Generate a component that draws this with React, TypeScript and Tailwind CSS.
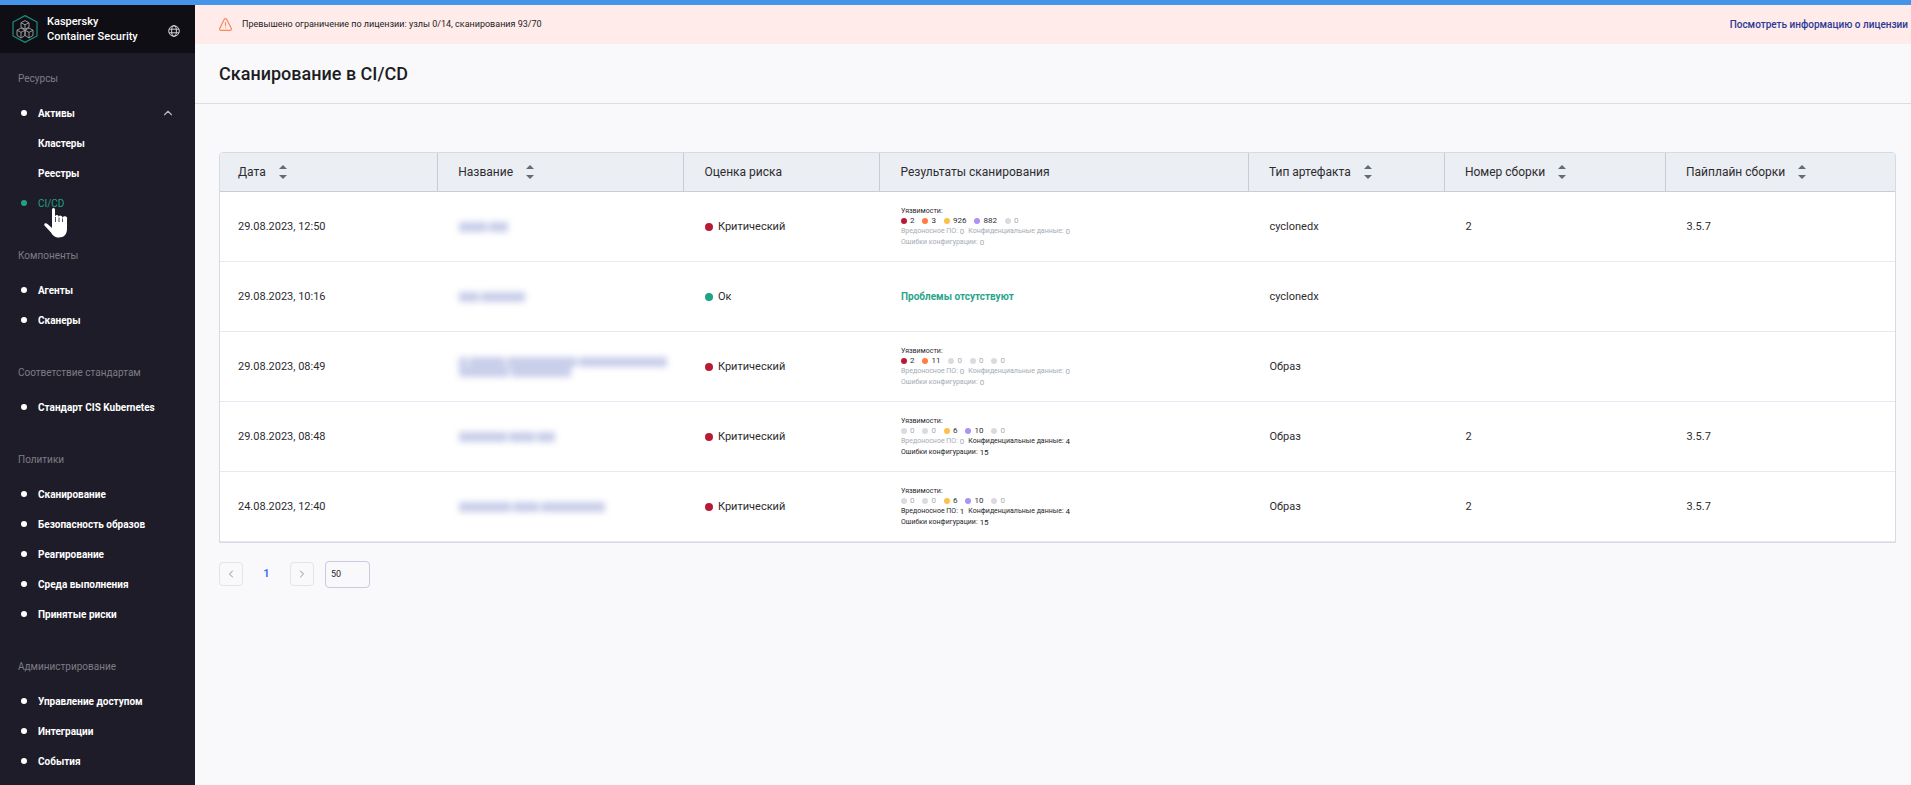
import { ChevronLeft, ChevronRight, ChevronUp } from "lucide-react";
import clsx from "clsx";

const sections = [
  {
    title: "Ресурсы",
    items: [
      { label: "Активы", expanded: true },
      { label: "Кластеры", nested: true },
      { label: "Реестры", nested: true },
      { label: "CI/CD", active: true },
    ],
  },
  { title: "Компоненты", items: [{ label: "Агенты" }, { label: "Сканеры" }] },
  { title: "Соответствие стандартам", items: [{ label: "Стандарт CIS Kubernetes" }] },
  {
    title: "Политики",
    items: [
      { label: "Сканирование" },
      { label: "Безопасность образов" },
      { label: "Реагирование" },
      { label: "Среда выполнения" },
      { label: "Принятые риски" },
    ],
  },
  {
    title: "Администрирование",
    items: [{ label: "Управление доступом" }, { label: "Интеграции" }, { label: "События" }],
  },
] as {
  title: string;
  items: { label: string; expanded?: boolean; nested?: boolean; active?: boolean }[];
}[];

const columns = [
  { label: "Дата", sortable: true, width: "w-[13%]" },
  { label: "Название", sortable: true, width: "w-[14.7%]" },
  { label: "Оценка риска", sortable: false, width: "w-[11.7%]" },
  { label: "Результаты сканирования", sortable: false, width: "w-[22%]" },
  { label: "Тип артефакта", sortable: true, width: "w-[11.7%]" },
  { label: "Номер сборки", sortable: true, width: "w-[13.2%]" },
  { label: "Пайплайн сборки", sortable: true, width: "" },
];

type Results = { vulns: number[]; malware: number; secrets: number; misconfig: number };

// name: word widths of every hidden line
const scans: {
  date: string;
  name: number[][];
  critical: boolean;
  results?: Results;
  type: string;
  build: string;
  pipeline: string;
}[] = [
  {
    date: "29.08.2023, 12:50",
    name: [[28, 19]],
    critical: true,
    results: { vulns: [2, 3, 926, 882, 0], malware: 0, secrets: 0, misconfig: 0 },
    type: "cyclonedx",
    build: "2",
    pipeline: "3.5.7",
  },
  { date: "29.08.2023, 10:16", name: [[20, 44]], critical: false, type: "cyclonedx", build: "", pipeline: "" },
  {
    date: "29.08.2023, 08:49",
    name: [[8, 36, 70, 88], [50, 60]],
    critical: true,
    results: { vulns: [2, 11, 0, 0, 0], malware: 0, secrets: 0, misconfig: 0 },
    type: "Образ",
    build: "",
    pipeline: "",
  },
  {
    date: "29.08.2023, 08:48",
    name: [[48, 26, 18]],
    critical: true,
    results: { vulns: [0, 0, 6, 10, 0], malware: 0, secrets: 4, misconfig: 15 },
    type: "Образ",
    build: "2",
    pipeline: "3.5.7",
  },
  {
    date: "24.08.2023, 12:40",
    name: [[52, 26, 64]],
    critical: true,
    results: { vulns: [0, 0, 6, 10, 0], malware: 1, secrets: 4, misconfig: 15 },
    type: "Образ",
    build: "2",
    pipeline: "3.5.7",
  },
];

const severityColors = ["bg-[#b71a35]", "bg-[#ff7d45]", "bg-[#fbc04f]", "bg-[#ac92f5]", "bg-[#d9dbe0]"];

function Logo() {
  return (
    <svg width="26" height="28" viewBox="0 0 26 28" fill="none" aria-hidden="true">
      <path d="M13 .6 25 7v14l-12 6.400L1 21V7Z" stroke="#1b8f7c" strokeWidth="1.200" />
      <g stroke="#a4a4aa" strokeWidth=".9" strokeLinejoin="round">
        <path d="m13 5.600 4 2.100v4.400l-4 2.200-4-2.200V7.700Z" />
        <path d="m9 7.700 4 2.100 4-2.100M13 9.800v4.500" />
        <path d="m9 13 4 2.200v5.200L9 23l-4-2.600v-5.200Z" />
        <path d="m5 15.200 4 2.200 4-2.200M9 17.400V23" />
        <path d="m17 13 4 2.200v5.200L17 23l-4-2.600v-5.200Z" />
        <path d="m13 15.200 4 2.200 4-2.200M17 17.400V23" />
      </g>
    </svg>
  );
}

function GlobeIcon() {
  return (
    <svg width="12" height="12" viewBox="0 0 12 12" fill="none" stroke="#e4e4e8" strokeWidth=".9">
      <circle cx="6" cy="6" r="5.300" />
      <ellipse cx="6" cy="6" rx="2.400" ry="5.300" />
      <path d="M1.200 4.200h9.600M1.200 7.800h9.600" />
    </svg>
  );
}

function WarningIcon() {
  return (
    <svg width="13" height="13" viewBox="0 0 13 13" fill="none" stroke="#fb8658" strokeLinecap="round" strokeLinejoin="round">
      <path d="M5.300 1.300a1.400 1.400 0 0 1 2.400 0l4.500 9a1.400 1.400 0 0 1-1.200 2.100H2a1.400 1.400 0 0 1-1.200-2.100Z" strokeWidth="1.200" />
      <path d="M6.500 4.500v3.300M6.500 9.700v.1" strokeWidth="1.100" />
    </svg>
  );
}

function HandCursor() {
  return (
    <svg className="absolute top-5 left-11" width="24" height="30" viewBox="0 0 24 30" fill="#fff" aria-hidden="true">
      <path d="M8 1.500a1.500 1.500 0 0 1 3 0V8.500a1.700 1.700 0 0 1 3.600.6 1.700 1.700 0 0 1 3.700.8 1.700 1.700 0 0 1 4.700 1.600V21c0 5-3 8.500-8 8.500-4 0-6-1.500-8-5L.5 17.500c-1-2 1.500-3 3-1.500L8 20Z" />
      <path d="M11.500 9v5M15 9.500V14M18.500 10.500V14" stroke="#1e1c28" strokeWidth=".8" />
    </svg>
  );
}

function SortIcon() {
  return (
    <svg width="8" height="14" viewBox="0 0 8 14" fill="#646b76">
      <path d="M0 4h8L4 0ZM0 10h8l-4 4Z" />
    </svg>
  );
}

function Sidebar() {
  return (
    <aside className="w-[195px] shrink-0 bg-[#1e1c28] text-[10px] text-white">
      <div className="flex h-12 items-center bg-[#0e0e14] pr-[15px] pl-3">
        <Logo />
        <p className="ml-[9px] text-[11px] leading-[15px] font-medium">
          Kaspersky
          <br />
          Container Security
        </p>
        <button type="button" aria-label="Язык" className="ml-auto pt-1">
          <GlobeIcon />
        </button>
      </div>
      <nav className="space-y-[17px] pt-[5px]">
        {sections.map((section) => (
          <div key={section.title}>
            <h2 className="flex h-10 items-center pl-[18px] text-[#7d7c85]">{section.title}</h2>
            <ul>
              {section.items.map((item) => (
                <li key={item.label} className="relative">
                  <a
                    href="#"
                    className={clsx(
                      "flex h-[30px] items-center pr-5 pl-[21px]",
                      item.active ? "text-[#1fa287]" : "font-bold",
                    )}
                  >
                    <span className={clsx("mr-[11px] size-1.5 rounded-full", !item.nested && "bg-current")} />
                    {item.label}
                    {item.expanded && <ChevronUp className="ml-auto size-3.5 text-[#b9b9bf]" />}
                  </a>
                  {item.active && <HandCursor />}
                </li>
              ))}
            </ul>
          </div>
        ))}
      </nav>
    </aside>
  );
}

function Counter({ label, value }: { label: string; value: number }) {
  return (
    <span className={clsx("flex items-center gap-0.5", value ? "text-[#1d1d1f]" : "text-[#a5abb3]")}>
      {label}: <span className="text-[8px]">{value}</span>
    </span>
  );
}

function ScanResults({ results }: { results?: Results }) {
  if (!results) {
    return <span className="text-[10px] font-bold text-[#2aa58b]">Проблемы отсутствуют</span>;
  }
  return (
    <div className="text-[7px] leading-[11px]">
      <p className="leading-[10px]">Уязвимости:</p>
      <div className="flex gap-2 text-[8px] leading-[10px]">
        {results.vulns.map((count, i) => (
          <span key={i} className={clsx("flex items-center gap-[3px]", !count && "text-[#a5abb3]")}>
            <span className={clsx("size-1.5 rounded-full", count ? severityColors[i] : "bg-[#d9dbe0]")} />
            {count}
          </span>
        ))}
      </div>
      <div className="flex gap-1">
        <Counter label="Вредоносное ПО" value={results.malware} />
        <Counter label="Конфиденциальные данные" value={results.secrets} />
      </div>
      <Counter label="Ошибки конфигурации" value={results.misconfig} />
    </div>
  );
}

function HiddenName({ lines }: { lines: number[][] }) {
  return (
    <div className="blur-[3px]">
      {lines.map((words, i) => (
        <div key={i} className="flex gap-0.5">
          {words.map((width, j) => (
            <span key={j} className="h-2.5 bg-[#c9ceea]" style={{ width }} />
          ))}
        </div>
      ))}
    </div>
  );
}

function ScanTable() {
  return (
    <div className="overflow-hidden rounded-t-sm border border-[#d8dae3] bg-white">
      <table className="w-full table-fixed text-left text-[11px] text-[#2c2c30]">
        <thead>
          <tr className="h-[38px] bg-[#ebeef3]">
            {columns.map((column) => (
              <th
                key={column.label}
                className={clsx(
                  "border-b border-l border-[#c8ccd4] pl-5 text-[12px] font-normal first:border-l-0 first:pl-[18px]",
                  column.width,
                )}
              >
                <span className="flex items-center gap-[13px]">
                  {column.label}
                  {column.sortable && (
                    <button type="button" aria-label={`Сортировать: ${column.label}`}>
                      <SortIcon />
                    </button>
                  )}
                </span>
              </th>
            ))}
          </tr>
        </thead>
        <tbody>
          {scans.map((scan) => (
            <tr key={scan.date} className="h-[70px] border-b border-[#e8e8f5] *:pt-0.5 *:pl-[21px] *:first:pl-[18px]">
              <td>{scan.date}</td>
              <td>
                <HiddenName lines={scan.name} />
              </td>
              <td>
                <span className="flex items-center gap-[5px]">
                  <span className={clsx("size-2 rounded-full", scan.critical ? "bg-[#b71a35]" : "bg-[#1fa287]")} />
                  {scan.critical ? "Критический" : "Ок"}
                </span>
              </td>
              <td>
                <ScanResults results={scan.results} />
              </td>
              <td>{scan.type}</td>
              <td>{scan.build}</td>
              <td>{scan.pipeline}</td>
            </tr>
          ))}
        </tbody>
      </table>
    </div>
  );
}

function Pagination() {
  const button = "flex size-6 items-center justify-center rounded-sm border border-[#e3e4ea] text-[#8f9096]";
  return (
    <div className="mt-[18px] flex items-center text-[11px]">
      <button type="button" aria-label="Назад" className={button}>
        <ChevronLeft className="size-3" />
      </button>
      <button type="button" className="w-[47px] text-center font-bold text-[#3f70f2]">
        1
      </button>
      <button type="button" aria-label="Вперёд" className={button}>
        <ChevronRight className="size-3" />
      </button>
      <select
        aria-label="Строк на странице"
        className="ml-[11px] h-[27px] w-[45px] appearance-none rounded-sm border border-[#c9cadb] bg-transparent px-[5px] pt-0.5 text-[9px]"
      >
        <option>50</option>
      </select>
    </div>
  );
}

export default function App() {
  return (
    <div className="flex h-screen flex-col overflow-hidden bg-[#f9f9fb] font-[Roboto,sans-serif] text-[#1d1d1f]">
      <div className="h-[5px] shrink-0 bg-[#4694ea]" />
      <div className="flex min-h-0 flex-1">
        <Sidebar />
        <main className="min-w-0 flex-1">
          <div className="flex h-[39px] items-center bg-[#ffebe9] pr-[3px] pl-6">
            <WarningIcon />
            <p className="ml-2.5 text-[9px]">Превышено ограничение по лицензии: узлы 0/14, сканирования 93/70</p>
            <a href="#" className="ml-auto text-[10px] font-medium text-[#2b3a94]">
              Посмотреть информацию о лицензии
            </a>
          </div>
          <header className="flex h-[60px] items-center border-b border-[#dcdde3] pl-6">
            <h1 className="text-[18px] font-medium">Сканирование в CI/CD</h1>
          </header>
          <div className="pt-12 pr-[15px] pl-6">
            <ScanTable />
            <Pagination />
          </div>
        </main>
      </div>
    </div>
  );
}
